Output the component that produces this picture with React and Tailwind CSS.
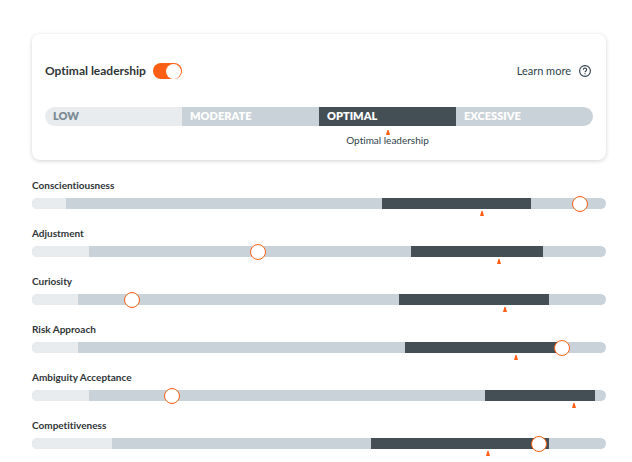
import { useState } from 'react'

const LEVELS = [
  { name: 'LOW', style: 'bg-[#e8ecef] text-[#7b8b95]' },
  { name: 'MODERATE', style: 'bg-[#c9d2d8] text-white' },
  { name: 'OPTIMAL', style: 'bg-[#444f55] text-white' },
  { name: 'EXCESSIVE', style: 'bg-[#c9d2d8] text-white' },
]

// all numbers are percentages of the bar
const TRAITS = [
  { id: 'conscientiousness', name: 'Conscientiousness', low: 6, from: 61, to: 87, ideal: 78.4, score: 95.5 },
  { id: 'adjustment', name: 'Adjustment', low: 10, from: 66, to: 89, ideal: 81.4, score: 39.4 },
  { id: 'curiosity', name: 'Curiosity', low: 8, from: 64, to: 90, ideal: 82.4, score: 17.4 },
  { id: 'risk', name: 'Risk Approach', low: 8, from: 65, to: 93, ideal: 84.3, score: 92.3 },
  { id: 'ambiguity', name: 'Ambiguity Acceptance', low: 10, from: 79, to: 98.1, ideal: 94.4, score: 24.4 },
  { id: 'competitiveness', name: 'Competitiveness', low: 14, from: 59, to: 90, ideal: 79.4, score: 88.3 },
]

function Marker() {
  return (
    <svg viewBox="0 0 4 5" className="block h-[5px] w-1" aria-hidden="true">
      <path d="M1.4 0H2.6L4 5H0Z" fill="#ff5f15" />
    </svg>
  )
}

function Toggle({ id, checked, onChange }) {
  return (
    <span className="relative inline-flex h-4 w-[29px]">
      <input
        id={id}
        type="checkbox"
        role="switch"
        checked={checked}
        onChange={onChange}
        className="peer h-4 w-[29px] cursor-pointer appearance-none rounded-full bg-[#c9d2d8] checked:bg-[#ff5f15]"
      />
      <span className="pointer-events-none absolute top-px left-px size-[15px] rounded-full bg-white peer-checked:left-[13px]" />
    </span>
  )
}

function TraitRow({ trait, showIdeal }) {
  const [score, setScore] = useState(trait.score)

  return (
    <div className="h-12">
      <label htmlFor={trait.id} className="block h-4 text-[10px] leading-[14px] font-bold text-[#2f3437]">
        {trait.name}
      </label>
      <div className="relative mt-1">
        <div className="flex h-[11px] overflow-hidden rounded-full bg-[#c9d2d8]">
          <div className="bg-[#e8ecef]" style={{ width: `${trait.low}%` }} />
          <div style={{ width: `${trait.from - trait.low}%` }} />
          <div className="bg-[#444f55]" style={{ width: `${trait.to - trait.from}%` }} />
        </div>
        <input
          id={trait.id}
          type="range"
          min="0"
          max="100"
          step="0.1"
          value={score}
          onChange={e => setScore(Number(e.target.value))}
          className="absolute -inset-x-2 -top-0.5 h-4 cursor-pointer appearance-none bg-transparent [&::-webkit-slider-thumb]:size-4 [&::-webkit-slider-thumb]:appearance-none [&::-webkit-slider-thumb]:rounded-full [&::-webkit-slider-thumb]:border [&::-webkit-slider-thumb]:border-[#ff5f15] [&::-webkit-slider-thumb]:bg-white"
        />
        {showIdeal && (
          <div className="absolute top-[13px] -translate-x-1/2" style={{ left: `${trait.ideal}%` }}>
            <Marker />
          </div>
        )}
      </div>
    </div>
  )
}

export default function App() {
  const [showIdeal, setShowIdeal] = useState(true)

  return (
    <main className="bg-white pt-[34px] pr-[26px] pl-8 font-['Lato',sans-serif] [font-variant-ligatures:none]">
      <section className="rounded-lg bg-white px-[13px] pt-7 pb-3 shadow-[0_1px_4px_rgba(0,0,0,0.18)]">
        <div className="flex items-center justify-between">
          <div className="flex items-center gap-[7px]">
            <label htmlFor="optimal" className="text-[12px] leading-[18px] font-bold text-[#2f3437]">
              Optimal leadership
            </label>
            <Toggle id="optimal" checked={showIdeal} onChange={() => setShowIdeal(!showIdeal)} />
          </div>
          <a href="#learn-more" className="flex items-center gap-2 text-[11px] text-[#2f3f4a]">
            Learn more
            <svg viewBox="0 0 12 12" className="mr-0.5 size-3" fill="none" stroke="currentColor" aria-hidden="true">
              <circle cx="6" cy="6" r="5.4" strokeWidth="1.1" />
              <path d="M4.4 4.7a1.6 1.6 0 1 1 2.5 1.3c-.6.4-.9.6-.9 1.2" strokeWidth="1.1" />
              <circle cx="6" cy="8.7" r="0.6" fill="currentColor" stroke="none" />
            </svg>
          </a>
        </div>

        <div className="mt-[27px] grid h-[19px] grid-cols-4 overflow-hidden rounded-full">
          {LEVELS.map(level => (
            <div key={level.name} className={`pl-2 text-[11px] leading-[18px] font-extrabold ${level.style}`}>
              {level.name}
            </div>
          ))}
        </div>
        <div className="mt-1 grid h-[18px] grid-cols-8">
          {showIdeal && (
            <div className="col-span-2 col-start-5 flex flex-col items-center">
              <Marker />
              <span className="text-[10px] leading-[10px] text-[#2f3f4a]">Optimal leadership</span>
            </div>
          )}
        </div>
      </section>

      <section className="mt-[18px]">
        {TRAITS.map(trait => (
          <TraitRow key={trait.id} trait={trait} showIdeal={showIdeal} />
        ))}
      </section>
    </main>
  )
}
